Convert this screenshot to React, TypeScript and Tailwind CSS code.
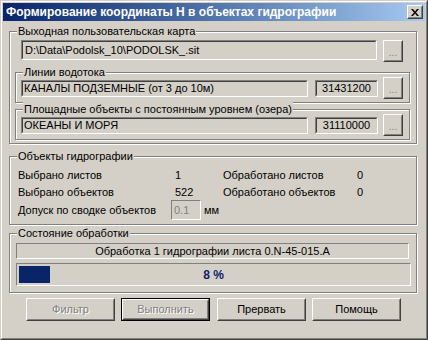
import React from 'react';

const face = "font-['Liberation_Sans',Arial,sans-serif]";

const Group: React.FC<{ label: string; className?: string; children: React.ReactNode }> = ({ label, className, children }) => (
    <div className={`relative border border-[#808080] shadow-[inset_1px_1px_0_#fff,1px_1px_0_#fff] ${className}`}>
        <span className="absolute left-[7px] top-[-8px] bg-[#d4d0c8] px-[1px] leading-[14px]">{label}</span>
        {children}
    </div>
);

const Sunken: React.FC<{ className?: string; inner?: string; children?: React.ReactNode }> = ({ className, inner, children }) => (
    <div className={`border border-t-[#808080] border-l-[#808080] border-b-white border-r-white ${className}`}>
        <div className={`h-full border border-t-[#404040] border-l-[#404040] border-b-[#d4d0c8] border-r-[#d4d0c8] flex items-center ${inner}`}>
            {children}
        </div>
    </div>
);

const Thin: React.FC<{ className?: string; children?: React.ReactNode }> = ({ className, children }) => (
    <div className={`border border-t-[#808080] border-l-[#808080] border-b-white border-r-white ${className}`}>{children}</div>
);

const Button: React.FC<{ label: string; disabled?: boolean; primary?: boolean; className?: string }> = ({ label, disabled, primary, className }) => (
    <div className={`${primary ? 'border border-black' : ''} ${className}`}>
        <div className="h-full border border-t-white border-l-white border-b-[#404040] border-r-[#404040]">
            <div className={`h-full flex items-center justify-center border border-t-[#d4d0c8] border-l-[#d4d0c8] border-b-[#808080] border-r-[#808080] ${disabled ? 'text-[#808080] [text-shadow:1px_1px_0_#fff]' : ''}`}>
                {label}
            </div>
        </div>
    </div>
);

const Dots = () => (
    <div className="w-[20px] h-[22px] border border-t-white border-l-white border-b-[#404040] border-r-[#404040]">
        <div className="h-full flex items-end justify-center pb-[3px] border border-t-[#d4d0c8] border-l-[#d4d0c8] border-b-[#808080] border-r-[#808080] text-[#808080] text-[10px] leading-[8px]">...</div>
    </div>
);

const CodeRow: React.FC<{ name: string; code: string }> = ({ name, code }) => (
    <div className="flex items-center h-[22px] pl-[5px]">
        <Sunken className="w-[287px] h-[17px]" inner="pl-[1px]">{name}</Sunken>
        <Sunken className="w-[63px] h-[17px] ml-[7px]" inner="justify-center">{code}</Sunken>
        <div className="ml-[5px]"><Dots /></div>
    </div>
);

export default function App() {
    return (
        <div className={`w-[428px] h-[340px] bg-[#d4d0c8] text-[11px] text-black ${face} border border-t-[#d4d0c8] border-l-[#d4d0c8] border-b-[#404040] border-r-[#404040]`}>
            <div className="h-full border border-t-white border-l-white border-b-[#808080] border-r-[#808080] p-[1px] flex flex-col">
                <div className="h-[18px] shrink-0 flex items-center pl-[3px] pr-[2px] bg-gradient-to-r from-[#0a246a] to-[#a6caf0]">
                    <span className="text-white font-bold text-[12px] leading-[18px] flex-1 truncate">Формирование координаты H в объектах гидрографии</span>
                    <div className="w-[16px] h-[14px] border border-t-white border-l-white border-b-[#404040] border-r-[#404040]">
                        <div className="h-full flex items-center justify-center border border-t-[#d4d0c8] border-l-[#d4d0c8] border-b-[#808080] border-r-[#808080] bg-[#d4d0c8]">
                            <svg width="8" height="7" viewBox="0 0 8 7">
                                <path d="M0 0h2l2 2.5L6 0h2L5 3.5 8 7H6L4 4.5 2 7H0l3-3.5z" fill="#000" />
                            </svg>
                        </div>
                    </div>
                </div>

                <Group label="Выходная пользовательская карта" className="mt-[10px] ml-[6px] w-[408px] pt-[8px] pl-[5px] pb-[3px]">
                    <div className="flex items-start ml-[6px]">
                        <Sunken className="w-[356px] h-[20px]" inner="pl-[2px]">D:\Data\Podolsk_10\PODOLSK_.sit</Sunken>
                        <div className="ml-[6px]"><Dots /></div>
                    </div>
                    <Group label="Линии водотока" className="mt-[10px] w-[395px] pt-[4px] pb-[3px]">
                        <CodeRow name="КАНАЛЫ ПОДЗЕМНЫЕ (от 3 до 10м)" code="31431200" />
                    </Group>
                    <Group label="Площадные объекты с постоянным уровнем (озера)" className="mt-[6px] w-[395px] pt-[4px] pb-[3px]">
                        <CodeRow name="ОКЕАНЫ И МОРЯ" code="31110000" />
                    </Group>
                </Group>

                <Group label="Объекты гидрографии" className="mt-[12px] ml-[6px] w-[408px] pt-[10px] pl-[8px] pb-[4px]">
                    <div className="flex items-center h-[17px]">
                        <span className="w-[157px]">Выбрано листов</span>
                        <span className="w-[48px]">1</span>
                        <span className="w-[134px]">Обработано листов</span>
                        <span>0</span>
                    </div>
                    <div className="flex items-center h-[16px]">
                        <span className="w-[157px]">Выбрано объектов</span>
                        <span className="w-[48px]">522</span>
                        <span className="w-[134px]">Обработано объектов</span>
                        <span>0</span>
                    </div>
                    <div className="flex items-center h-[20px]">
                        <span className="w-[153px]">Допуск по сводке объектов</span>
                        <Thin className="w-[30px] h-[20px] flex items-center pl-[2px] text-[#808080]">0.1</Thin>
                        <span className="ml-[3px]">мм</span>
                    </div>
                </Group>

                <Group label="Состояние обработки" className="mt-[8px] ml-[6px] w-[408px] pt-[9px] pl-[6px] pb-[6px]">
                    <Thin className="w-[393px] h-[16px] flex items-center justify-center">Обработка 1 гидрографии листа 0.N-45-015.A</Thin>
                    <Thin className="relative mt-[4px] w-[395px] h-[23px] p-[2px]">
                        <div className="w-[31px] h-full bg-[#0a246a]" />
                        <span className="absolute inset-0 flex items-center justify-center font-bold text-[12px] text-[#0a246a]">8 %</span>
                    </Thin>
                </Group>

                <div className="flex mt-[5px] ml-[23px]">
                    <Button label="Фильтр" disabled className="w-[89px] h-[23px]" />
                    <Button label="Выполнить" disabled primary className="w-[89px] h-[23px] ml-[6px]" />
                    <Button label="Прервать" className="w-[89px] h-[23px] ml-[7px]" />
                    <Button label="Помощь" className="w-[89px] h-[23px] ml-[6px]" />
                </div>
            </div>
        </div>
    );
}
